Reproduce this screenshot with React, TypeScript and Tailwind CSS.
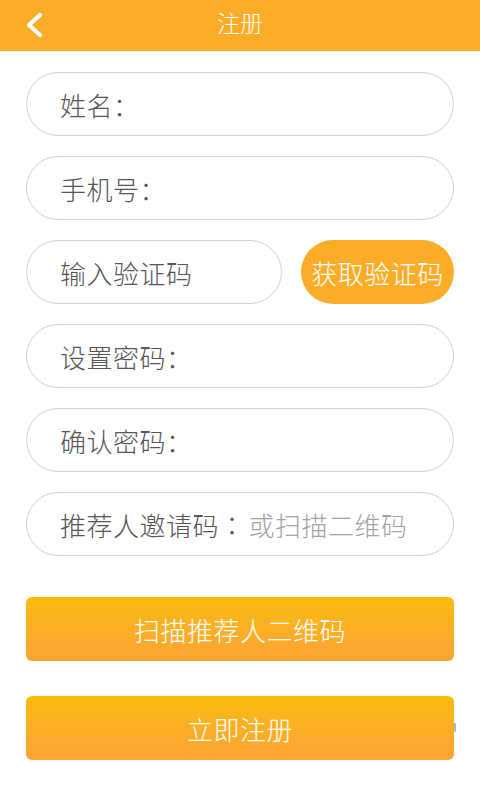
import React from "react";

const font = { fontFamily: '"Noto Sans CJK SC", "Noto Sans", sans-serif' };
const tc = { fontFamily: '"Noto Sans CJK TC", "Noto Sans", sans-serif' };

function Field({ children }: { children: React.ReactNode }) {
  return (
    <div className="h-[64px] w-full rounded-full border border-[#d0d0d0] bg-white flex items-center pl-[33px] text-[26px] font-light tracking-[0.5px] text-[#555555] whitespace-nowrap">
      {children}
    </div>
  );
}

export default function App() {
  return (
    <div className="w-[480px] h-[800px] bg-white relative overflow-hidden" style={font}>
      <div className="h-[51px] bg-[#fbad29] flex items-center relative">
        <svg className="absolute left-[23px] top-[11px]" width="22" height="28" viewBox="0 0 22 28">
          <polyline points="17,4 6,14 17,24" fill="none" stroke="white" strokeWidth="4.2" strokeLinecap="round" strokeLinejoin="round" />
        </svg>
        <div className="flex-1 text-center text-white text-[23px] font-light leading-none pb-[6px]">注册</div>
      </div>
      <div className="px-[26px] pt-[21px] flex flex-col gap-[20px]">
        <Field>姓名：</Field>
        <Field>手机号：</Field>
        <div className="flex gap-[19px]">
          <div className="h-[64px] w-[256px] rounded-full border border-[#d0d0d0] flex items-center pl-[33px] text-[26px] font-light tracking-[0.5px] text-[#555555] whitespace-nowrap">
            输入验证码
          </div>
          <div className="h-[64px] flex-1 rounded-full bg-[#fbad29] flex items-center justify-center text-white text-[26px] font-light tracking-[0.5px] whitespace-nowrap">
            获取验证码
          </div>
        </div>
        <Field>设置密码：</Field>
        <Field>确认密码：</Field>
        <Field>
          <span>推荐人邀请码</span>
          <span style={tc}>：</span>
          <span className="ml-[3px] text-[#a3a3a3]">或扫描二维码</span>
        </Field>
      </div>
      <div className="px-[26px] mt-[41px] flex flex-col gap-[35px]">
        <div className="h-[64px] rounded-[6px] bg-gradient-to-b from-[#f9bb06] to-[#fda334] flex items-center justify-center text-white text-[26px] font-light tracking-[0.5px]">
          扫描推荐人二维码
        </div>
        <div className="relative h-[64px] rounded-[6px] bg-gradient-to-b from-[#f9bb06] to-[#fda334] flex items-center justify-center text-white text-[26px] font-light tracking-[0.5px]">
          立即注册
          <div className="absolute right-[-2px] top-[27px] w-[2px] h-[9px] bg-[#8fc3e0] rounded-full" />
        </div>
      </div>
    </div>
  );
}
